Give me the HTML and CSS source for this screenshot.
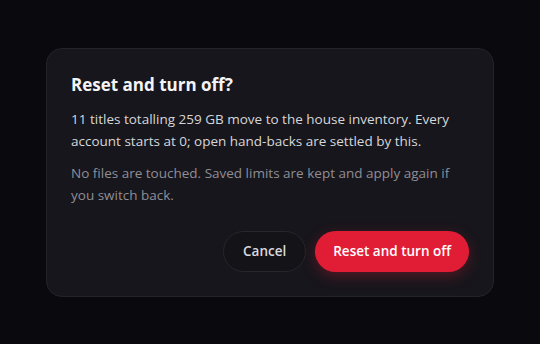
FILE: index.html
```html
<!DOCTYPE html>
<html lang="en">
<head>
    <meta charset="UTF-8">
    <meta name="viewport" content="width=device-width, initial-scale=1.0">
    <title>Reset and turn off</title>
    <link rel="stylesheet" href="styles.css">
</head>
<body>

<div class="overlay">
    <div class="dialog">
        <h2 class="dialog-title">Reset and turn off?</h2>
        <p class="dialog-text">11 titles totalling 259 GB move to the house inventory. Every account starts at 0; open hand-backs are settled by this.</p>
        <p class="dialog-note">No files are touched. Saved limits are kept and apply again if you switch back.</p>
        <div class="dialog-actions">
            <button class="btn btn-cancel">Cancel</button>
            <button class="btn btn-danger">Reset and turn off</button>
        </div>
    </div>
</div>

</body>
</html>
```

FILE: styles.css
```css
body {
    margin: 0;
    background-color: #0a0a0e;
    font-family: "Open Sans", "Noto Sans", sans-serif;
}
.overlay {
    width: 540px;
    height: 344px;
    display: flex;
    align-items: center;
    justify-content: center;
}
.dialog {
    width: 398px;
    padding: 24px;
    background-color: #17161c;
    border: 1px solid #24232a;
    border-radius: 16px;
}
.dialog-title {
    margin: 0 0 11px;
    font-size: 17px;
    line-height: 24px;
    font-weight: 700;
    color: #f4f4f6;
}
.dialog-text, .dialog-note {
    margin: 0;
    font-size: 13.5px;
    line-height: 22px;
    color: #d6d6da;
}
.dialog-note {
    margin-top: 10px;
    color: #8f8e96;
}
.dialog-actions {
    display: flex;
    justify-content: flex-end;
    gap: 9px;
    margin-top: 25px;
}
.btn {
    height: 41px;
    padding: 0 19px;
    border-radius: 21px;
    font-family: inherit;
    font-size: 13.5px;
    font-weight: 600;
    cursor: pointer;
}
.btn-cancel {
    background-color: #141318;
    border: 1px solid #27262d;
    color: #d9d9de;
}
.btn-danger {
    padding: 0 18px;
    background-color: #e11d35;
    border: none;
    color: #ffffff;
    box-shadow: 0 4px 14px rgba(225, 29, 53, 0.3);
}
```
